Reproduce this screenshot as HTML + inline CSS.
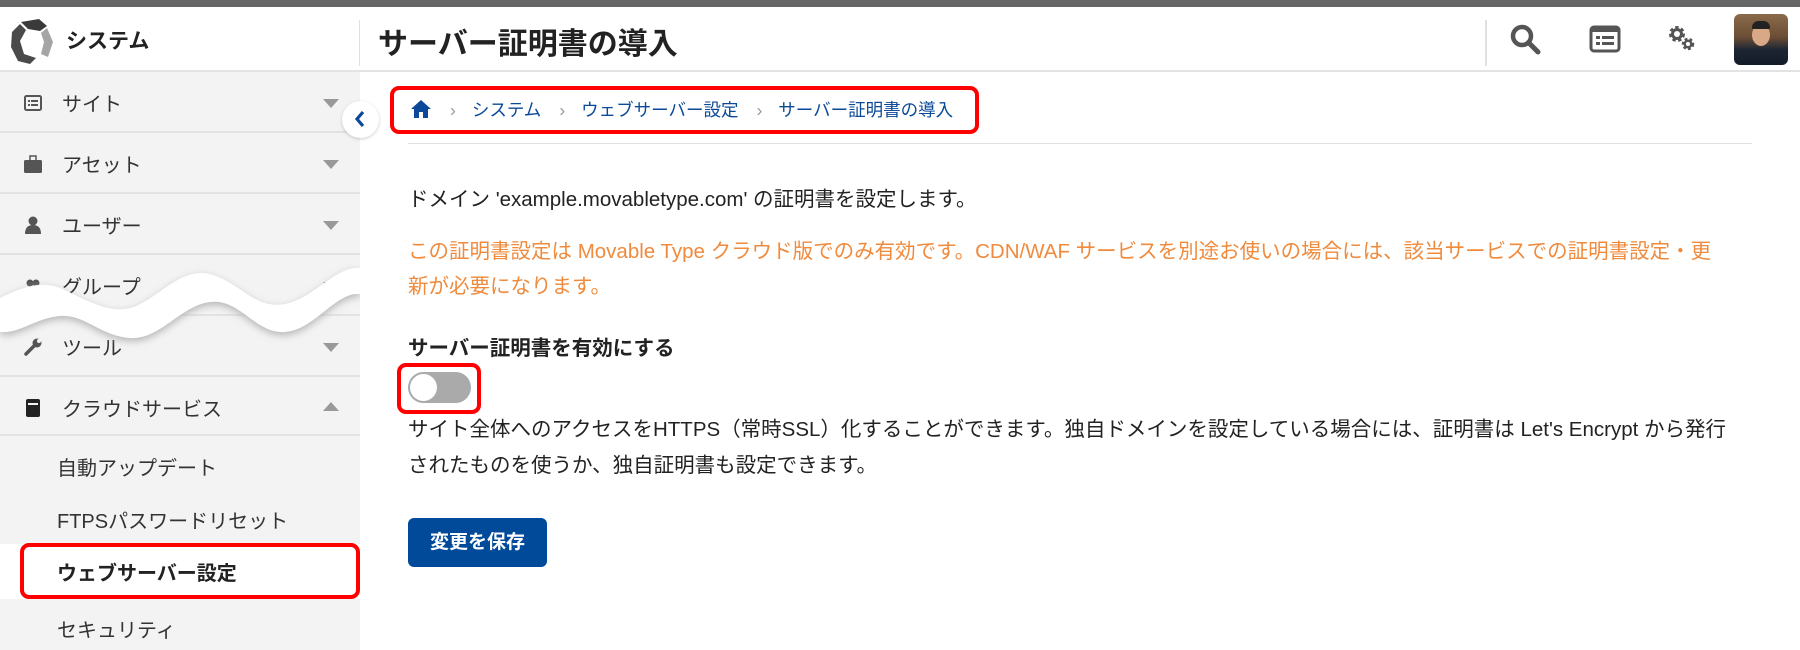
<!DOCTYPE html>
<html><head><meta charset="utf-8">
<style>
*{box-sizing:border-box;margin:0;padding:0}
body{width:1800px;height:650px;overflow:hidden;background:#fff;font-family:"Liberation Sans","Noto Sans CJK JP",sans-serif;color:#222;position:relative}
.topbar{position:absolute;left:0;top:0;width:1800px;height:7px;background:#666}
.header{position:absolute;left:0;top:7px;width:1800px;height:65px;border-bottom:2px solid #e3e3e3;background:#fff}
.sidebar{position:absolute;left:0;top:72px;width:360px;height:578px;background:#f3f3f3}
.item{position:absolute;left:0;width:360px;height:61px;border-bottom:2px solid #e2e2e2;font-size:20px;color:#333}
.item .t{position:absolute;left:62px;top:16px}
.item .ic{position:absolute;left:24px;top:22px;width:18px;height:18px}
.item .ar{position:absolute;left:323px;top:27px;width:0;height:0;border-left:8px solid transparent;border-right:8px solid transparent;border-top:9px solid #999}
.sub{position:absolute;left:57px;font-size:20px;color:#333}
.abs{position:absolute}
</style></head><body>
<div class="topbar"></div>
<div class="header">
 <svg class="abs" style="left:9px;top:10px" width="46" height="48" viewBox="0 0 46 48">
  <path d="M12 5 L30 2 L38 9 L31 14 L19 12 Z" fill="#3a3a3a"/>
  <path d="M38 11 L44 25 L39 40 L32 37 L35 25 L32 16 Z" fill="#a5a5a5"/>
  <path d="M3 15 L11 7 L17 13 L11 24 L15 37 L27 41 L21 47 L9 44 L2 30 Z" fill="#4a4a4a"/>
 </svg>
 <div class="abs" style="left:66px;top:18px;font-size:21px;font-weight:bold;color:#222">システム</div>
 <div class="abs" style="left:359px;top:13px;width:1px;height:46px;background:#e0e0e0"></div>
 <div class="abs" style="left:378px;top:12px;font-size:30px;font-weight:bold;color:#222">サーバー証明書の導入</div>
 <div class="abs" style="left:1485px;top:13px;width:2px;height:46px;background:#e0e0e0"></div>
 <svg class="abs" style="left:1510px;top:17px" width="32" height="32" viewBox="0 0 32 32"><circle cx="12" cy="12" r="9" fill="none" stroke="#555" stroke-width="4.5"/><path d="M19 19 L28 28" stroke="#555" stroke-width="5" stroke-linecap="round"/></svg>
 <svg class="abs" style="left:1589px;top:18px" width="32" height="28" viewBox="0 0 32 28"><rect x="2" y="2" width="28" height="24" rx="3" fill="none" stroke="#555" stroke-width="3"/><rect x="2" y="2" width="28" height="5" fill="#555"/><rect x="7" y="11" width="4" height="3" fill="#555"/><rect x="13" y="11" width="12" height="3" fill="#555"/><rect x="7" y="17" width="4" height="3" fill="#555"/><rect x="13" y="17" width="12" height="3" fill="#555"/></svg>
 <svg class="abs" style="left:1667px;top:17px" width="30" height="30" viewBox="0 0 30 30"><circle cx="10" cy="10" r="6" fill="none" stroke="#555" stroke-width="4" stroke-dasharray="3 2.3"/><circle cx="10" cy="10" r="4.5" fill="none" stroke="#555" stroke-width="3"/><circle cx="21" cy="20" r="4.5" fill="none" stroke="#555" stroke-width="3.5" stroke-dasharray="2.5 2"/><circle cx="21" cy="20" r="3.3" fill="none" stroke="#555" stroke-width="2.5"/></svg>
 <div class="abs" style="left:1734px;top:7px;width:54px;height:51px;border-radius:6px;background:linear-gradient(180deg,#8a6a4a 0%,#6b4e35 45%,#1d2533 70%,#141b28 100%);overflow:hidden">
  <div class="abs" style="left:18px;top:10px;width:18px;height:22px;border-radius:50%;background:#d9a887"></div>
  <div class="abs" style="left:18px;top:7px;width:18px;height:8px;border-radius:8px 8px 2px 2px;background:#222"></div>
 </div>
</div>

<div class="sidebar">
 <div class="item" style="top:0"><svg class="ic" viewBox="0 0 18 18"><rect x="1" y="2" width="16" height="14" rx="1.5" fill="none" stroke="#555" stroke-width="2"/><rect x="4" y="6" width="2" height="2" fill="#555"/><rect x="7" y="6" width="7" height="2" fill="#555"/><rect x="4" y="10" width="2" height="2" fill="#555"/><rect x="7" y="10" width="7" height="2" fill="#555"/></svg><span class="t">サイト</span><span class="ar"></span></div>
 <div class="item" style="top:61px"><svg class="ic" viewBox="0 0 18 18"><rect x="0" y="5" width="18" height="13" rx="1.5" fill="#555"/><rect x="6" y="1" width="6" height="5" fill="none" stroke="#555" stroke-width="1.5"/></svg><span class="t">アセット</span><span class="ar"></span></div>
 <div class="item" style="top:122px"><svg class="ic" viewBox="0 0 18 18"><circle cx="9" cy="5" r="4.5" fill="#555"/><path d="M1 18 Q1 9 9 9 Q17 9 17 18Z" fill="#555"/></svg><span class="t">ユーザー</span><span class="ar"></span></div>
 <div class="item" style="top:183px"><svg class="ic" viewBox="0 0 18 18"><circle cx="6" cy="6" r="3.5" fill="#555"/><circle cx="12" cy="6" r="3.5" fill="#555"/><path d="M0 17 Q0 10 6 10 Q12 10 12 17Z M8 17 Q8 10 12 10 Q18 10 18 17Z" fill="#555"/></svg><span class="t">グループ</span><span class="ar"></span></div>
 <div class="item" style="top:244px"><svg class="ic" viewBox="0 0 18 18"><path d="M2 16 L10 8" stroke="#555" stroke-width="3.5" stroke-linecap="round"/><circle cx="13" cy="5" r="4.5" fill="#555"/><circle cx="15" cy="3" r="2" fill="#f3f3f3"/></svg><span class="t">ツール</span><span class="ar"></span></div>
 <div class="item" style="top:305px;height:59px"><svg class="ic" viewBox="0 0 18 18"><rect x="2" y="0" width="14" height="18" rx="2" fill="#222"/><rect x="4" y="4" width="10" height="2" fill="#f3f3f3"/></svg><span class="t">クラウドサービス</span><span class="ar" style="border-top:none;border-bottom:9px solid #999;top:25px"></span></div>
 <div class="sub" style="top:380px">自動アップデート</div>
 <div class="sub" style="top:433px">FTPSパスワードリセット</div>
 <div class="abs" style="left:0;top:472px;width:360px;height:55px;background:#fff"></div>
 <div class="abs" style="left:20px;top:471px;width:340px;height:56px;border:4px solid #f00;border-radius:9px"></div>
 <div class="sub" style="top:485px;font-weight:bold;color:#222">ウェブサーバー設定</div>
 <div class="sub" style="top:542px">セキュリティ</div>
 <svg class="abs" style="left:0;top:180px" width="360" height="100" viewBox="0 0 360 100">
  <defs><filter id="s" x="-10%" y="-30%" width="120%" height="160%"><feGaussianBlur stdDeviation="4"/></filter></defs>
  <g transform="translate(0,3)" filter="url(#s)" fill="#b5b5b5">
  <path d="M0 46 C20 36 40 28 60 36 S105 62 130 56 S180 14 210 22 S255 58 285 52 S335 14 360 16 L360 42 C335 40 315 78 285 80 S240 46 210 50 S160 88 130 86 S85 62 60 64 S20 82 0 80Z"/></g>
  <path d="M0 46 C20 36 40 28 60 36 S105 62 130 56 S180 14 210 22 S255 58 285 52 S335 14 360 16 L360 42 C335 40 315 78 285 80 S240 46 210 50 S160 88 130 86 S85 62 60 64 S20 82 0 80Z" fill="#fff"/>
 </svg>
</div>
<div class="abs" style="left:342px;top:101px;width:37px;height:37px;border-radius:50%;background:#fff;box-shadow:0 1px 3px rgba(0,0,0,.2)"></div>
<svg class="abs" style="left:354px;top:110px" width="12" height="18" viewBox="0 0 12 18"><path d="M9 2 L3 9 L9 16" fill="none" stroke="#0b4a98" stroke-width="3.2"/></svg>

<div class="abs" style="left:390px;top:86px;width:589px;height:48px;border:4px solid #f00;border-radius:9px"></div>
<svg class="abs" style="left:410px;top:99px" width="22" height="20" viewBox="0 0 22 20"><path d="M11 1 L1 10 L4 10 L4 19 L9 19 L9 13 L13 13 L13 19 L18 19 L18 10 L21 10Z" fill="#0b4a98"/></svg>
<div class="abs" style="left:390px;top:97px;font-size:17.5px;color:#0b4a98;white-space:nowrap"><span style="margin-left:60px;color:#999">›</span><span style="margin-left:16px">システム</span><span style="margin-left:18px;color:#999">›</span><span style="margin-left:16px">ウェブサーバー設定</span><span style="margin-left:18px;color:#999">›</span><span style="margin-left:16px">サーバー証明書の導入</span></div>
<div class="abs" style="left:408px;top:143px;width:1344px;height:1px;background:#e0e0e0"></div>

<div class="abs" style="left:408px;top:182px;font-size:20.5px;color:#222">ドメイン 'example.movabletype.com' の証明書を設定します。</div>
<div class="abs" style="left:408px;top:234px;width:1310px;font-size:20.5px;line-height:35px;color:#f08a3c">この証明書設定は Movable Type クラウド版でのみ有効です。CDN/WAF サービスを別途お使いの場合には、該当サービスでの証明書設定・更新が必要になります。</div>
<div class="abs" style="left:408px;top:331px;font-size:20.5px;font-weight:bold;color:#222">サーバー証明書を有効にする</div>
<div class="abs" style="left:397px;top:363px;width:84px;height:51px;border:4px solid #f00;border-radius:9px"></div>
<div class="abs" style="left:408px;top:372px;width:63px;height:31px;border-radius:16px;background:#aaa"></div>
<div class="abs" style="left:410px;top:374px;width:27px;height:27px;border-radius:50%;background:#fff"></div>
<div class="abs" style="left:408px;top:412px;width:1330px;font-size:20.5px;line-height:36px;color:#222">サイト全体へのアクセスをHTTPS（常時SSL）化することができます。独自ドメインを設定している場合には、証明書は Let's Encrypt から発行されたものを使うか、独自証明書も設定できます。</div>
<div class="abs" style="left:408px;top:518px;width:139px;height:49px;border-radius:6px;background:#004a99;color:#fff;font-size:19px;font-weight:bold;text-align:center;line-height:49px">変更を保存</div>
</body></html>
